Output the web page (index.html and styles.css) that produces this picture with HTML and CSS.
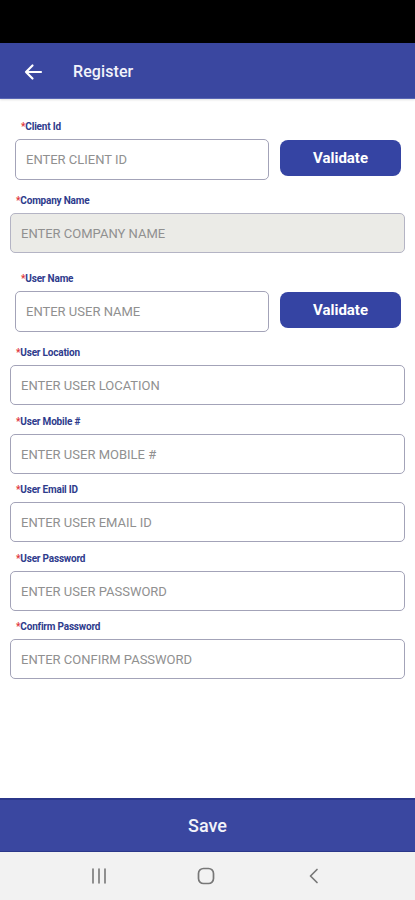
FILE: index.html
```html
<!DOCTYPE html>
<html lang="en">
<head>
<meta charset="utf-8">
<title>Register</title>
<link rel="stylesheet" href="styles.css">
</head>
<body>
<div class="screen">
  <div class="status"></div>
  <header class="appbar">
    <svg class="back" width="20" height="18" viewBox="0 0 20 18" aria-hidden="true">
      <path d="M18 9H3M9.5 2.5L3 9l6.5 6.5" fill="none" stroke="#fff" stroke-width="2.2" stroke-linecap="round" stroke-linejoin="round"/>
    </svg>
    <span class="title">Register</span>
  </header>

  <main class="content">
    <div class="field field-validate">
      <label class="label"><span class="req">*</span>Client Id</label>
      <div class="row">
        <input class="input input-tall" placeholder="ENTER CLIENT ID">
        <button class="validate">Validate</button>
      </div>
    </div>

    <div class="field field-full gap-15">
      <label class="label"><span class="req">*</span>Company Name</label>
      <input class="input disabled" placeholder="ENTER COMPANY NAME">
    </div>

    <div class="field field-validate gap-20">
      <label class="label"><span class="req">*</span>User Name</label>
      <div class="row">
        <input class="input input-tall" placeholder="ENTER USER NAME">
        <button class="validate">Validate</button>
      </div>
    </div>

    <div class="field field-full gap-15">
      <label class="label"><span class="req">*</span>User Location</label>
      <input class="input" placeholder="ENTER USER LOCATION">
    </div>

    <div class="field field-full gap-11">
      <label class="label"><span class="req">*</span>User Mobile #</label>
      <input class="input" placeholder="ENTER USER MOBILE #">
    </div>

    <div class="field field-full gap-10">
      <label class="label"><span class="req">*</span>User Email ID</label>
      <input class="input" placeholder="ENTER USER EMAIL ID">
    </div>

    <div class="field field-full gap-11">
      <label class="label"><span class="req">*</span>User Password</label>
      <input class="input" placeholder="ENTER USER PASSWORD">
    </div>

    <div class="field field-full gap-10">
      <label class="label"><span class="req">*</span>Confirm Password</label>
      <input class="input" placeholder="ENTER CONFIRM PASSWORD">
    </div>
  </main>

  <button class="save">Save</button>

  <nav class="navbar">
    <svg class="nav-recent" width="18" height="18" viewBox="0 0 18 18" aria-hidden="true">
      <path d="M3 2v14M9 2v14M15 2v14" stroke="#777" stroke-width="1.6" stroke-linecap="round"/>
    </svg>
    <svg class="nav-home" width="18" height="18" viewBox="0 0 18 18" aria-hidden="true">
      <rect x="1.5" y="1.5" width="15" height="15" rx="5" fill="none" stroke="#777" stroke-width="1.7"/>
    </svg>
    <svg class="nav-back" width="18" height="18" viewBox="0 0 18 18" aria-hidden="true">
      <path d="M15 2.5L8.5 9l6.5 6.5" fill="none" stroke="#777" stroke-width="1.7" stroke-linecap="round" stroke-linejoin="round"/>
    </svg>
  </nav>
</div>
</body>
</html>
```

FILE: styles.css
```css
* { box-sizing: border-box; }

html, body {
  margin: 0;
  padding: 0;
  background: #fff;
  font-family: Roboto, "Liberation Sans", Arial, sans-serif;
}

.screen {
  width: 415px;
  height: 900px;
  display: flex;
  flex-direction: column;
  overflow: hidden;
}

.status {
  height: 43px;
  background: #000;
  flex: none;
}

.appbar {
  height: 56px;
  flex: none;
  background: #3a47a0;
  display: flex;
  align-items: center;
  padding-left: 23px;
  padding-top: 2px;
  border-bottom: 1px solid #5966b4;
  box-shadow: 0 1px 2px rgba(0, 0, 0, 0.12);
}

.back { display: block; }

.title {
  margin-left: 30px;
  color: #f2f3fa;
  font-size: 16px;
  font-weight: 500;
  letter-spacing: 0.1px;
}

.content {
  flex: 1;
  display: flex;
  flex-direction: column;
  padding-top: 22px;
}

.field {
  display: flex;
  flex-direction: column;
}

.field-validate { padding: 0 14px 0 15px; }
.field-full { padding: 0 10px; }

.gap-10 { margin-top: 10px; }
.gap-11 { margin-top: 11px; }
.gap-15 { margin-top: 15px; }
.gap-20 { margin-top: 20px; }

.label {
  height: 12px;
  line-height: 12px;
  margin: 0 0 6px 6px;
  font-size: 10px;
  font-weight: 700;
  color: #2e3b8c;
  letter-spacing: -0.2px;
}

.req { color: #e0343c; }

.row {
  display: flex;
  align-items: flex-start;
  gap: 11px;
}

.input {
  display: block;
  width: 100%;
  height: 40px;
  border: 1px solid #a3a3b8;
  border-radius: 5px;
  background: #fff;
  padding: 0 10px;
  font-family: Roboto, "Liberation Sans", Arial, sans-serif;
  font-size: 13px;
  color: #333;
  outline: none;
}

.row .input { width: 254px; flex: none; }

.input-tall { height: 41px; }

.input::placeholder {
  color: #909090;
  opacity: 1;
}

.input.disabled {
  background: #ebebe7;
  border-color: #b4b4c4;
}

.validate {
  width: 121px;
  height: 36px;
  margin-top: 1px;
  flex: none;
  border: none;
  border-radius: 8px;
  background: #3544a3;
  color: #fff;
  font-family: Roboto, "Liberation Sans", Arial, sans-serif;
  font-size: 15px;
  font-weight: 700;
  padding: 0;
}

.save {
  flex: none;
  height: 54px;
  width: 100%;
  border: none;
  border-top: 2px solid #2b378a;
  border-bottom: 1px solid #2b378a;
  background: #3a47a0;
  color: #f2f3fa;
  font-family: Roboto, "Liberation Sans", Arial, sans-serif;
  font-size: 18px;
  font-weight: 500;
  padding: 0;
}

.navbar {
  flex: none;
  height: 48px;
  background: #f2f2f2;
  display: flex;
  align-items: center;
  padding-left: 90px;
}

.navbar svg { display: block; flex: none; }
.nav-home { margin-left: 89px; }
.nav-back { margin-left: 87px; }
```
